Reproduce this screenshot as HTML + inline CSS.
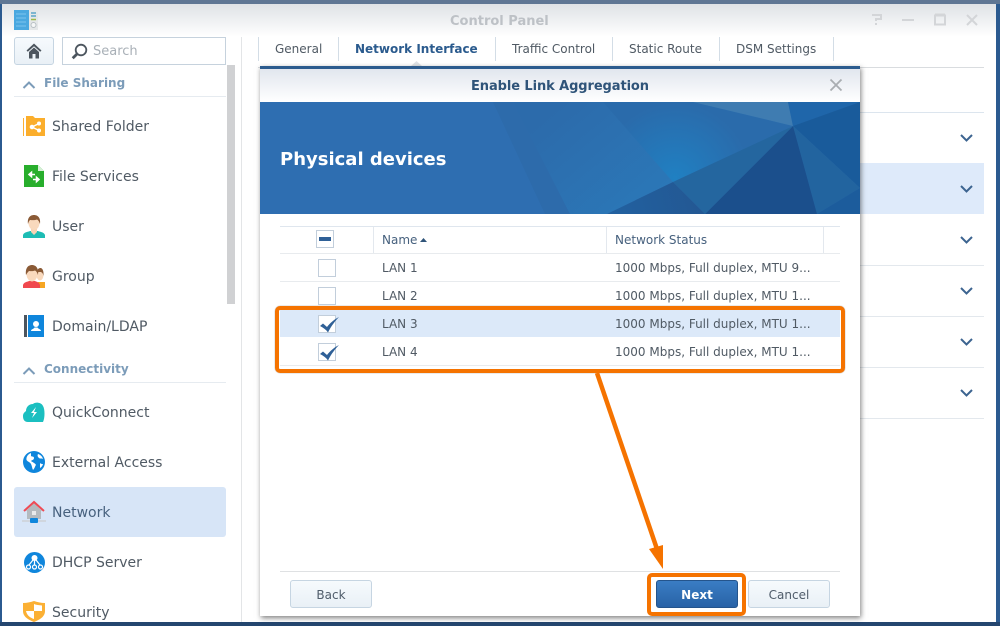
<!DOCTYPE html>
<html><head><meta charset="utf-8"><title>Control Panel</title>
<style>
html,body{margin:0;padding:0}
body{width:1000px;height:626px;overflow:hidden;position:relative;background:#2b5a90;font-family:"DejaVu Sans",sans-serif;font-size:13px;color:#505a64}
div{position:absolute;box-sizing:border-box}
.t{white-space:nowrap;line-height:16px}
.nav{font-size:14px;left:52px;color:#505a64}
.sec{font-size:12px;font-weight:bold;left:44px;color:#7c9cb9}
.tab{top:41px;font-size:12px;color:#505a64}
.sep{top:37px;width:1px;height:24px;background:#d3dde6}
.cell{font-size:12px;color:#505a64}
.hl{height:1px;background:#e8ebee;left:280px;width:560px}
.cb{left:318px;width:18px;height:18px;border:1px solid #c2cedb;background:#fff}
.btn{top:580px;width:82px;height:28px;border:1px solid #c6d5e2;border-radius:3px;background:linear-gradient(#f6fafd,#e9f0f6);text-align:center;line-height:28px;font-size:12px;color:#4f5c6a}
svg{position:absolute;overflow:visible}
</style></head><body>
<div style="left:0;top:0;width:1000px;height:4px;background:#5f7694"></div>
<div style="left:0;top:622px;width:1000px;height:4px;background:#24466f"></div>
<div style="left:2px;top:4px;width:994px;height:618px;background:#fff"></div>
<div style="left:2px;top:4px;width:994px;height:33px;background:linear-gradient(#dfe2e6,#fff)"></div>
<div class="t" style="left:450px;top:14px;font-size:13px;font-weight:bold;color:#bdc1c6">Control Panel</div>

<!-- window icon -->
<svg style="left:14px;top:10px" width="24" height="20" viewBox="0 0 24 20"><rect width="24" height="20" fill="#e4e7e8"/><rect width="15" height="20" fill="#4aa8e0"/><path d="M2 4h10M2 8h10M2 12h10M2 16h10" stroke="#7cc4ee" stroke-width="1"/><path d="M17 3h5M17 6h5" stroke="#5ba5c8" stroke-width="1.5"/><path d="M17 9.500h5" stroke="#9fb84a" stroke-width="1.500"/><circle cx="19.500" cy="15" r="2.500" fill="#f5f7f7" stroke="#b7bfc4"/></svg>
<!-- window controls -->
<svg style="left:870px;top:12px" width="115" height="16" viewBox="0 0 115 16" fill="none" stroke="#d3d5d8" stroke-width="2"><path d="M2 3h9v4H6v2M6 11v2"/><path d="M32 8h12"/><rect x="65" y="3.500" width="10" height="9"/><path d="M65 2.500h10" stroke-width="2"/><path d="M97 3l10 10M107 3l-10 10"/></svg>

<!-- sidebar -->
<div style="left:14px;top:37px;width:40px;height:28px;border:1px solid #c6d5e2;border-radius:3px;background:linear-gradient(#f6fafd,#e9f0f6)"></div>
<svg style="left:26px;top:43px" width="16" height="16" viewBox="0 0 16 16"><path d="M8 0.500L0.500 7.500 1.800 8.800 8 3.200l6.200 5.600 1.300-1.300z" fill="#4c555e"/><path d="M3 9l5-4.500L13 9v6.500H9.500V11h-3v4.500H3z" fill="#4c555e"/></svg>
<div style="left:62px;top:37px;width:164px;height:28px;border:1px solid #c6d2dd;background:#fff"></div>
<svg style="left:71px;top:43px" width="17" height="17" viewBox="0 0 17 17" fill="none" stroke="#4c555e"><circle cx="10" cy="7" r="5.300" stroke-width="1.800"/><path d="M6 11l-4.300 4.300" stroke-width="2.800"/></svg>
<div class="t" style="left:93px;top:44px;color:#a9b0b7">Search</div>
<div style="left:227px;top:65px;width:8px;height:239px;background:#d0d1d3"></div>
<div style="left:241px;top:37px;width:1px;height:585px;background:#e3e5e7"></div>

<svg style="left:22px;top:80px" width="14" height="9" fill="none" stroke="#7c9cb9" stroke-width="2"><path d="M1.500 8L7 2.500 12.500 8"/></svg>
<div class="t sec" style="top:75px">File Sharing</div>
<div style="left:14px;top:96px;width:212px;height:1px;background:#e6ebf0"></div>
<svg style="left:22px;top:366px" width="14" height="9" fill="none" stroke="#7c9cb9" stroke-width="2"><path d="M1.500 8L7 2.500 12.500 8"/></svg>
<div class="t sec" style="top:361px">Connectivity</div>
<div style="left:14px;top:382px;width:212px;height:1px;background:#e6ebf0"></div>
<div style="left:14px;top:487px;width:212px;height:50px;border-radius:3px;background:#d7e5f7"></div>

<div class="t nav" style="top:119px">Shared Folder</div>
<div class="t nav" style="top:169px">File Services</div>
<div class="t nav" style="top:219px">User</div>
<div class="t nav" style="top:269px">Group</div>
<div class="t nav" style="top:319px">Domain/LDAP</div>
<div class="t nav" style="top:405px">QuickConnect</div>
<div class="t nav" style="top:455px">External Access</div>
<div class="t nav" style="top:505px;color:#47617e">Network</div>
<div class="t nav" style="top:555px">DHCP Server</div>
<div class="t nav" style="top:605px">Security</div>

<!-- icons -->
<svg style="left:23px;top:116px" width="22" height="20" viewBox="0 0 22 20"><path d="M0 2h1v18H0z" fill="#fbb034"/><path d="M3 0h7l2 2h10v18H3z" fill="#fbae2c"/><g fill="#fff" stroke="#fff"><circle cx="9" cy="11" r="1.800"/><circle cx="16" cy="7.500" r="1.500"/><circle cx="16" cy="14.500" r="1.500"/><path d="M9 11l7-3.500M9 11l7 3.500" fill="none" stroke-width="1.300"/></g></svg>
<svg style="left:24px;top:165px" width="20" height="22" viewBox="0 0 20 22"><path d="M0 0h14l6 6v16H0z" fill="#28ae2c"/><path d="M14 0v6h6z" fill="#d6f0d6"/><path d="M5 9.500h6M5 9.500l2.500-2.200v4.400zM15 14.500H9M15 14.500l-2.500-2.200v4.400z" stroke="#fff" stroke-width="1.500" fill="#fff"/></svg>
<svg style="left:23px;top:215px" width="22" height="23" viewBox="0 0 22 23"><path d="M0 23v-3c1-3 5-3 7-4h8c2 1 6 1 7 4v3z" fill="#1dbcb4"/><path d="M8 14h6v3l-3 3-3-3z" fill="#f7d3b4"/><ellipse cx="11" cy="8" rx="5.500" ry="7" fill="#f9d9bd"/><path d="M5 9C4 2 8 0 11 0s7 2 6 9c-1-3-2-4-3-4.500C12 5.500 8 5 7 5 6 6 5.500 7 5 9z" fill="#8a5a36"/></svg>
<svg style="left:23px;top:265px" width="22" height="23" viewBox="0 0 22 23"><path d="M15 17h7v6h-7z" fill="#f6a623"/><ellipse cx="17" cy="10" rx="3.500" ry="5.500" fill="#f9d9bd"/><path d="M14 8c0-4 2-5 3.500-5S21 5 20.500 11c-.5-3-2-4-3-4s-3 0-3.500 1z" fill="#8a5a36"/><path d="M0 23v-3c1-3 4-3 6-4h6c2 1 4 1 5 4v3z" fill="#f0484e"/><ellipse cx="9" cy="9" rx="5.500" ry="7.500" fill="#f9d9bd"/><path d="M3 10C2 2 6 0 9 0s7 2 6 10c-1-3-2-4-3-4.500-2 1-5 .5-6 .5-1 1-2 2-3 4z" fill="#8a5a36"/></svg>
<svg style="left:24px;top:315px" width="20" height="22" viewBox="0 0 20 22"><rect width="3" height="22" fill="#4c555e"/><rect x="4" width="16" height="22" fill="#0f86dc"/><circle cx="12" cy="9" r="3" fill="#fff"/><path d="M7 16c0-2 3-2 3.500-3.500h3C14 14 17 14 17 16z" fill="#fff"/></svg>
<svg style="left:23px;top:402px" width="22" height="20" viewBox="0 0 22 20"><path d="M5 20C1 20 0 17 0 14c0-3 2-4 3-5 0-4 3-7 7-7 2-2 8-2 10 2 2 3 2 12 0 16z" fill="#1bbfc0"/><path d="M13 5l-5 6h3l-2 5 5-6h-3z" fill="#fff"/></svg>
<svg style="left:23px;top:451px" width="22" height="22" viewBox="0 0 22 22"><circle cx="11" cy="11" r="11" fill="#0f86dc"/><path d="M8 2C5 3 3 6 3.500 9 5 11 7 11 8 13c1 2 1 4 2 6 2-2 2-4 3-5-1-2-4-3-5-4 1-1 3-1 3-3s-2-1-3-2zM15 3c-1 2 0 3 1 4 1 1 3 0 4 1-.5-2-2-4-5-5zM17 12c1 1 2 1 3 1-.5 2-1.500 3-3 4z" fill="#fff"/></svg>
<svg style="left:22px;top:500px" width="24" height="24" viewBox="0 0 24 24"><path d="M5 10h14v9H5z" fill="#b4babf"/><path d="M12 3l-8 8h16z" fill="#b4babf"/><path d="M2 11l10-9 10 9" fill="none" stroke="#ef4b55" stroke-width="2"/><rect x="10" y="11" width="4" height="4" fill="#e8eaec"/><path d="M0 21h24" stroke="#cdd2d6" stroke-width="1.500"/><rect x="8" y="18" width="8" height="5" rx="1" fill="#0f86dc"/></svg>
<svg style="left:24px;top:552px" width="21" height="21" viewBox="0 0 21 21"><circle cx="10.500" cy="10.500" r="10.500" fill="#0f86dc"/><circle cx="10.500" cy="6" r="3" fill="#fff"/><g fill="none" stroke="#fff" stroke-width="1.200"><circle cx="4.500" cy="15" r="2"/><circle cx="10.500" cy="15" r="2"/><circle cx="16.500" cy="15" r="2"/><path d="M10.500 8v5M9 8l-4 5M12 8l4 5"/></g></svg>
<svg style="left:23px;top:601px" width="22" height="21" viewBox="0 0 22 21"><path d="M0 2c4 0 8-1 11-2 3 1 7 2 11 2v8c0 6-6 9-11 11C6 19 0 16 0 10z" fill="#fbb034"/><path d="M11 3c2 1 5 1 8 1.500V10h-8zM3 10h8v8c-3-1-7-3-8-8z" fill="#fff"/></svg>

<!-- tabs -->
<div class="sep" style="left:258px"></div><div class="sep" style="left:338px"></div><div class="sep" style="left:495px"></div><div class="sep" style="left:612px"></div><div class="sep" style="left:719px"></div><div class="sep" style="left:833px"></div>
<div class="t tab" style="left:275px">General</div>
<div class="t tab" style="left:355px;font-weight:bold;color:#2b5b8e">Network Interface</div>
<div class="t tab" style="left:512px">Traffic Control</div>
<div class="t tab" style="left:629px">Static Route</div>
<div class="t tab" style="left:736px">DSM Settings</div>
<div style="left:258px;top:67px;width:726px;height:1px;background:#d9dcdf"></div>
<svg style="left:411px;top:61px" width="11" height="5"><path d="M0 5l5.500-5L11 5z" fill="#dfe2e5"/></svg>

<!-- right panel behind -->
<div style="left:860px;top:112px;width:124px;height:1px;background:#dce5ee"></div>
<div style="left:860px;top:163px;width:124px;height:51px;background:#deeafa"></div>
<div style="left:860px;top:265px;width:124px;height:1px;background:#e3e8ed"></div>
<div style="left:860px;top:316px;width:124px;height:1px;background:#e3e8ed"></div>
<div style="left:860px;top:367px;width:124px;height:1px;background:#e3e8ed"></div>
<div style="left:860px;top:418px;width:124px;height:1px;background:#e3e8ed"></div>
<svg style="left:960px;top:130px" width="13" height="270" fill="none" stroke="#3c6490" stroke-width="2"><path d="M1 5l5.500 5.500L12 5M1 56l5.500 5.500L12 56M1 107l5.500 5.500L12 107M1 158l5.500 5.500L12 158M1 209l5.500 5.500L12 209M1 260l5.500 5.500L12 260"/></svg>

<!-- dialog -->
<div style="left:260px;top:66px;width:600px;height:550px;background:#fff;box-shadow:1px 2px 5px rgba(0,0,0,.5)"></div>
<div style="left:260px;top:66px;width:600px;height:3px;background:#2b5b8e"></div>
<div style="left:260px;top:69px;width:600px;height:33px;background:linear-gradient(#e1e6ee,#fff)"></div>
<div class="t" style="left:471px;top:79px;font-size:13px;font-weight:bold;letter-spacing:-.09px;color:#2f5479">Enable Link Aggregation</div>
<svg style="left:830px;top:79px" width="12" height="12" fill="none" stroke="#a9adb1" stroke-width="1.800"><path d="M.5.500l11 11M11.500.500l-11 11"/></svg>

<svg style="left:260px;top:102px" width="600" height="112" viewBox="260 102 600 112">
<defs>
<linearGradient id="b" gradientUnits="userSpaceOnUse" x1="560" y1="105" x2="650" y2="214"><stop offset="0" stop-color="#2c6bab"/><stop offset="1" stop-color="#2b78b8"/></linearGradient>
<radialGradient id="c" gradientUnits="userSpaceOnUse" cx="675" cy="178" r="75"><stop offset="0" stop-color="#2080c2"/><stop offset="1" stop-color="#2a6bab"/></radialGradient>
<linearGradient id="d" gradientUnits="userSpaceOnUse" x1="620" y1="214" x2="705" y2="190"><stop offset="0" stop-color="#22609f"/><stop offset="1" stop-color="#235792"/></linearGradient>
</defs>
<rect x="260" y="102" width="600" height="112" fill="#2e6eb1"/>
<polygon points="493,102 513,102 570,214 545,214" fill="#2d6bab"/>
<polygon points="513,102 693,102 793,126 673,182 607,214 570,214" fill="url(#b)"/>
<polygon points="603,102 693,102 793,126 673,182" fill="url(#c)"/>
<polygon points="693,102 788,102 793,126" fill="#3f7cb1"/>
<polygon points="788,102 860,102 793,126" fill="#1f66aa"/>
<polygon points="860,102 860,188 793,126" fill="#195b9b"/>
<polygon points="793,126 860,188 817,214" fill="#22649f"/>
<polygon points="860,188 860,214 817,214" fill="#1c5c9c"/>
<polygon points="793,126 817,214 705,214" fill="#1b4f8c"/>
<polygon points="793,126 705,214 673,182" fill="#24669f"/>
<polygon points="673,182 705,214 607,214" fill="url(#d)"/>
</svg>
<div class="t" style="left:280px;top:150px;font-size:18px;line-height:20px;font-weight:bold;color:#fff">Physical devices</div>

<!-- table -->
<div class="hl" style="top:226px;background:#dfe6ee"></div>
<div class="hl" style="top:253px"></div>
<div class="hl" style="top:281px"></div>
<div class="hl" style="top:309px"></div>
<div style="left:280px;top:310px;width:560px;height:27px;background:#dce9f9"></div>
<div class="hl" style="top:365px"></div>
<div style="left:373px;top:227px;width:1px;height:26px;background:#e3e8ee"></div>
<div style="left:606px;top:227px;width:1px;height:26px;background:#e3e8ee"></div>
<div style="left:823px;top:227px;width:1px;height:26px;background:#e3e8ee"></div>
<div class="cb" style="left:316px;top:230px"></div>
<div style="left:319px;top:237px;width:12px;height:4px;background:#2f6097"></div>
<div class="cb" style="top:259px"></div>
<div class="cb" style="top:287px"></div>
<div class="cb" style="top:315px"></div>
<div class="cb" style="top:343px"></div>
<svg style="left:320px;top:317px" width="19" height="16" viewBox="0 0 19 16"><path d="M0 9l3-2.500 4 3.500C10 6 14 2.500 19 0c-3 3-8 9-11 15.500C6 12.500 3 10.500 0 9z" fill="#2f6097"/></svg>
<svg style="left:320px;top:345px" width="19" height="16" viewBox="0 0 19 16"><path d="M0 9l3-2.500 4 3.500C10 6 14 2.500 19 0c-3 3-8 9-11 15.500C6 12.500 3 10.500 0 9z" fill="#2f6097"/></svg>

<div class="t cell" style="left:382px;top:232px;color:#47617e">Name</div>
<svg style="left:420px;top:238px" width="7" height="4"><path d="M0 4l3.500-4L7 4z" fill="#2f5479"/></svg>
<div class="t cell" style="left:615px;top:232px;color:#47617e">Network Status</div>
<div class="t cell" style="left:382px;top:260px">LAN 1</div>
<div class="t cell" style="left:382px;top:288px">LAN 2</div>
<div class="t cell" style="left:382px;top:316px">LAN 3</div>
<div class="t cell" style="left:382px;top:344px">LAN 4</div>
<div class="t cell" style="left:615px;top:260px">1000 Mbps, Full duplex, MTU 9...</div>
<div class="t cell" style="left:615px;top:288px">1000 Mbps, Full duplex, MTU 1...</div>
<div class="t cell" style="left:615px;top:316px">1000 Mbps, Full duplex, MTU 1...</div>
<div class="t cell" style="left:615px;top:344px">1000 Mbps, Full duplex, MTU 1...</div>

<!-- footer -->
<div style="left:280px;top:571px;width:560px;height:1px;background:#dfe1e3"></div>
<div class="btn" style="left:290px">Back</div>
<div class="btn" style="left:748px">Cancel</div>
<div class="btn" style="left:656px;border-color:#24548c;background:linear-gradient(#3a7dc4,#2862a6);color:#fff;font-weight:bold">Next</div>

<!-- annotations -->
<div style="left:275px;top:306px;width:570px;height:67px;border:4px solid #f57300;border-radius:5px;box-shadow:0 0 1px #777"></div>
<div style="left:647px;top:573px;width:99px;height:43px;border:4px solid #f57300;border-radius:5px"></div>
<svg style="left:0;top:0" width="1000" height="626"><path d="M597 373L658 552" stroke="#f57300" stroke-width="4.500" fill="none"/><path d="M649 549L663 545V569z" fill="#f57300"/></svg>
</body></html>
